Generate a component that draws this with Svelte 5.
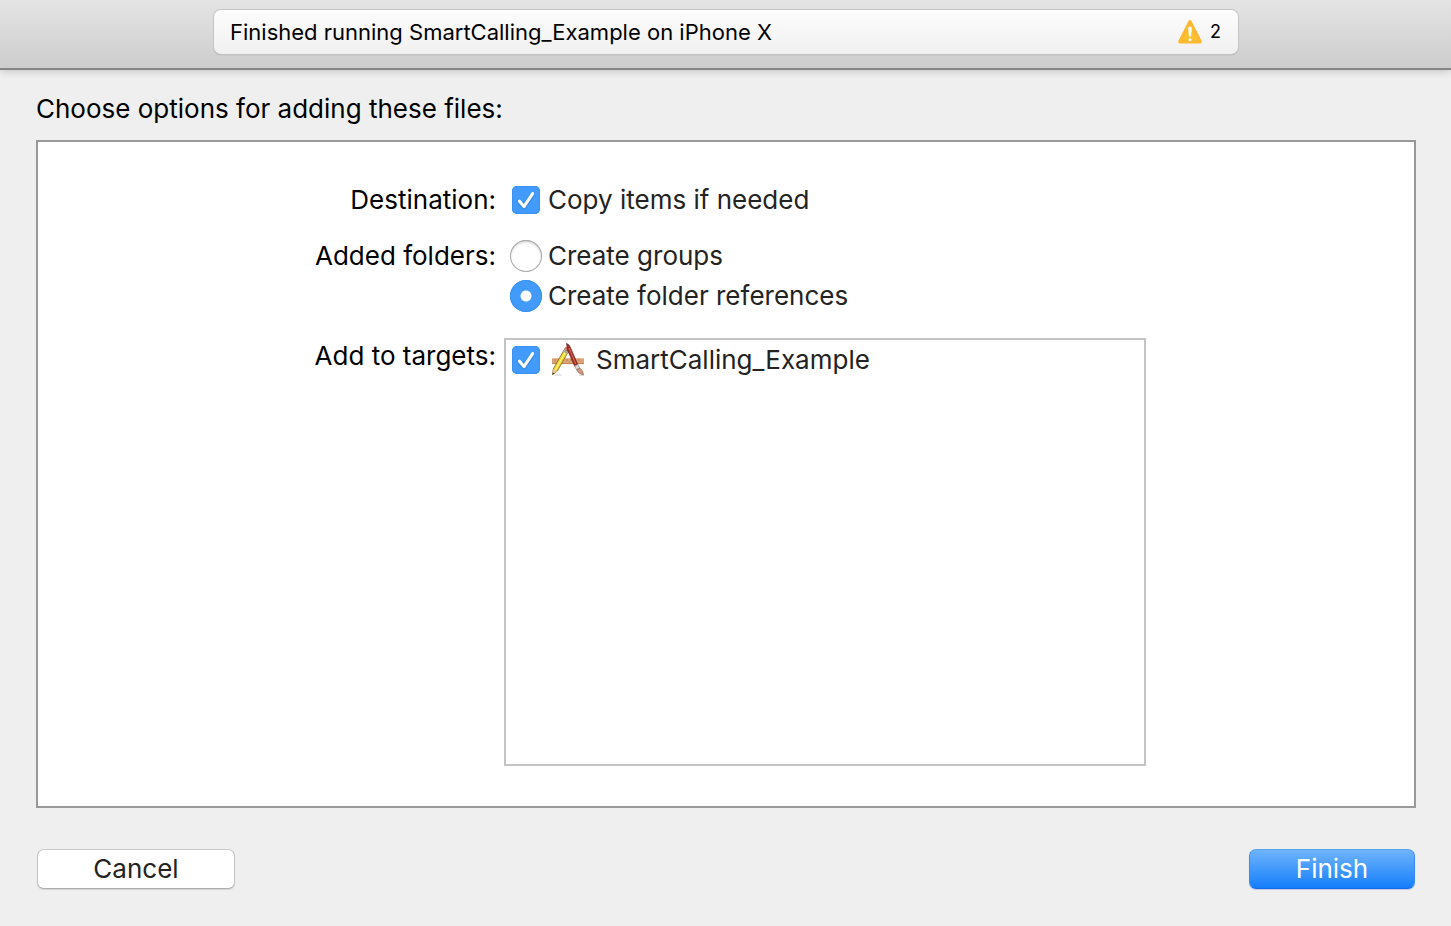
<script>
  let copyItems = $state(true);
  let folderMode = $state('references');
  let targets = $state([{ name: 'SmartCalling_Example', selected: true }]);
</script>

{#snippet tick()}
  <svg class="tick" viewBox="0 0 28 28" aria-hidden="true">
    <path d="M7.5 15.2 L12 20.6 L20.6 7.6" />
  </svg>
{/snippet}

<div class="window">
  <header class="toolbar">
    <div class="status">
      <span class="message">Finished running SmartCalling_Example on iPhone X</span>
      <span class="warnings">
        <svg class="warning" viewBox="0 0 26 26" aria-hidden="true">
          <path d="M13 2.8 L23.2 22.8 H2.8 Z" fill="#fec02f" stroke="#fdb932" stroke-width="3.4" stroke-linejoin="round" />
          <path d="M11.2 9.4 Q11.2 7.6 13 7.6 Q14.8 7.6 14.8 9.4 L14 17.4 H12 Z" fill="#fff" />
          <circle cx="13" cy="20.8" r="1.5" fill="#fff" />
        </svg>
        <span>2</span>
      </span>
    </div>
  </header>

  <main class="sheet">
    <h1>Choose options for adding these files:</h1>

    <div class="panel">
      <div class="caption">Destination:</div>
      <div class="options">
        <label class="option">
          <span class="control">
            <input type="checkbox" bind:checked={copyItems} />
            {@render tick()}
          </span>
          Copy items if needed
        </label>
      </div>

      <div class="caption">Added folders:</div>
      <div class="options" role="radiogroup" aria-label="Added folders">
        <label class="option">
          <span class="control"><input type="radio" name="folders" value="groups" bind:group={folderMode} /></span>
          Create groups
        </label>
        <label class="option">
          <span class="control"><input type="radio" name="folders" value="references" bind:group={folderMode} /></span>
          Create folder references
        </label>
      </div>

      <div class="caption targets-caption">Add to targets:</div>
      <div class="targets">
        {#each targets as target}
          <label class="option">
            <span class="control">
              <input type="checkbox" bind:checked={target.selected} />
              {@render tick()}
            </span>
            <svg class="app" viewBox="0 0 36 36" aria-hidden="true">
              <rect x="2" y="16" width="32" height="6" fill="#dda176" />
              <path d="M2 16.5 H34" stroke="#edbd98" />
              <path d="M2 21.6 H34" stroke="#c18459" />
              <path d="M5 17v2 M9 17v2 M13 17v2 M17 17v2 M21 17v2 M25 17v2 M29 17v2" stroke="#bd8056" />
              <path d="M5 33.2 H12 M29 33.4 H34" stroke="#dedede" stroke-width="1.2" />
              <path d="M14.4 7.4 L18.4 9.6 L7.2 29.2 L2.6 32.6 L3.2 27 Z" fill="#f3d32e" stroke="#7b6527" stroke-width=".8" />
              <path d="M15.8 9.6 L5.2 28.2" stroke="#fff37d" stroke-width="1.2" />
              <path d="M3.2 27 L7.2 29.2 L2.6 32.6 Z" fill="#e9c69a" />
              <path d="M2.9 30.4 L4.5 31.3 L2.3 33 Z" fill="#333" />
              <path d="M13.6 8.7 L17.8 11" stroke="#a6a6a6" stroke-width="2" />
              <path d="M14.6 6.6 Q15.6 4.6 17.8 5.8 Q19.8 7 18.6 9 Z" fill="#ea777b" stroke="#b95157" stroke-width=".6" />
              <path d="M16.6 1.4 Q19.6 2.4 20.8 6.4 L27.8 22.6 L24.6 24 L17.4 7.8 Z" fill="#a72d20" stroke="#64261f" stroke-width=".7" />
              <path d="M19 6 L25.8 22" stroke="#df7764" stroke-width=".9" />
              <path d="M24.6 24 L27.8 22.6 L30 26.2 L26.6 27.7 Z" fill="#ddd" stroke="#858585" stroke-width=".7" />
              <path d="M26.6 27.7 L30 26.2 Q33.6 28.8 33.4 33 Q28.4 32 26.6 27.7 Z" fill="#ce9b81" stroke="#9a6655" stroke-width=".7" />
            </svg>
            {target.name}
          </label>
        {/each}
      </div>
    </div>

    <footer>
      <button type="button" class="cancel">Cancel</button>
      <button type="submit" class="finish">Finish</button>
    </footer>
  </main>
</div>

<style>
  :global(body) {
    margin: 0;
    background: #efefef;
  }

  .window {
    display: flex;
    flex-direction: column;
    min-height: 100vh;
    box-sizing: border-box;
    color: #000;
    font-family: Inter, "Liberation Sans", sans-serif;
    font-size: 26px;
    line-height: 32px;
  }

  .toolbar {
    display: flex;
    justify-content: center;
    padding: 10px 213px 14px 214px;
    background: linear-gradient(#e4e4e4, #cdcdcd);
    border-bottom: 2px solid #858585;
    box-shadow: 0 1px 8px rgba(0, 0, 0, 0.2);
  }

  .status {
    display: flex;
    flex: 1;
    align-items: center;
    justify-content: space-between;
    height: 44px;
    padding: 0 17px 0 16px;
    border-radius: 7px;
    background: linear-gradient(#fdfdfd, #f0f0f0);
    box-shadow: 0 0 0 1px #c4c4c4, 0 1px 1px #888;
    box-sizing: border-box;
    font-size: 22px;
  }

  .warnings {
    display: flex;
    align-items: center;
    gap: 7px;
    font-size: 18px;
  }

  .warning {
    width: 26px;
    height: 26px;
  }

  .sheet {
    display: flex;
    flex: 1;
    flex-direction: column;
    padding: 23px 35px 37px 36px;
  }

  h1 {
    margin: 0 0 15px;
    font-size: inherit;
    font-weight: 400;
  }

  .panel {
    display: grid;
    flex: 1;
    grid-template-columns: 458fr 642fr 260fr;
    grid-template-rows: auto auto 1fr;
    column-gap: 8px;
    row-gap: 24px;
    padding: 42px 0 40px;
    border: 2px solid #999;
    background: #fff;
  }

  .caption {
    grid-column: 1;
    text-align: right;
    white-space: nowrap;
  }

  .options {
    display: flex;
    grid-column: 2;
    flex-direction: column;
    gap: 8px;
    padding-left: 6px;
  }

  .targets {
    grid-column: 2;
    margin-top: 2px;
    padding: 4px;
    border: 2px solid #c4c4c4;
  }

  .targets-caption {
    padding-top: 4px;
  }

  .option {
    display: flex;
    align-items: center;
    gap: 6px;
    color: #232323;
  }

  .control {
    display: grid;
    flex: none;
    width: 32px;
    height: 32px;
    place-items: center;
  }

  .control > :global(*) {
    grid-area: 1 / 1;
  }

  input {
    margin: 0;
    appearance: none;
  }

  input[type='checkbox'] {
    width: 28px;
    height: 28px;
    border-radius: 5px;
    box-shadow: inset 0 0 0 1px #b5b5b5;
  }

  input[type='checkbox']:checked {
    background: #429bfa;
    box-shadow: inset 0 0 0 1px #3b92f3;
  }

  .tick {
    width: 28px;
    height: 28px;
    fill: none;
    stroke: #fff;
    stroke-width: 3;
    stroke-linecap: round;
    stroke-linejoin: round;
    pointer-events: none;
    filter: drop-shadow(0 1px 1px rgba(0, 60, 140, 0.3));
  }

  input:not(:checked) + .tick {
    visibility: hidden;
  }

  input[type='radio'] {
    width: 32px;
    height: 32px;
    border-radius: 50%;
    background: #fff;
    box-shadow: inset 0 0 0 1px #aaa, inset 0 2px 3px rgba(0, 0, 0, 0.22);
  }

  input[type='radio']:checked {
    background: radial-gradient(circle, #fff 0 5px, #429bfa 6px);
    box-shadow: inset 0 0 0 1px #3b92f3;
  }

  .app {
    width: 36px;
    height: 36px;
    margin: -2px 4px -2px 2px;
  }

  footer {
    display: flex;
    justify-content: space-between;
    margin-top: 41px;
    padding: 0 1px;
  }

  button {
    height: 40px;
    padding: 0;
    border: 1px solid;
    border-radius: 7px;
    font: inherit;
  }

  .cancel {
    width: 198px;
    border-color: #c8c8c8 #c4c4c4 #adadad;
    background: #fff;
    color: #232323;
    box-shadow: 0 1px 1px rgba(0, 0, 0, 0.12);
  }

  .finish {
    width: 166px;
    border-color: #5ba3ed #3b8cf2 #1568ed;
    background: linear-gradient(#6fb4fa, #157efc);
    color: #fff;
    box-shadow: 0 1px 1px rgba(0, 60, 160, 0.2);
  }
</style>
